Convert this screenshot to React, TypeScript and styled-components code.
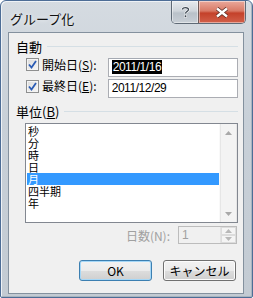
import * as React from "react";
import styled, { createGlobalStyle } from "styled-components";

const GlobalStyle = createGlobalStyle`
  html, body {
    margin: 0;
    padding: 0;
    background: #ffffff;
  }
  body {
    font-family: "Noto Sans CJK JP", "Noto Sans", sans-serif;
  }
`;

const UI_FONT = `"Noto Sans CJK JP", "Noto Sans", sans-serif`;

const Window = styled.div`
  box-sizing: border-box;
  width: 253px;
  height: 298px;
  border: 1px solid #4d6d96;
  border-radius: 6px 6px 2px 2px;
  padding: 0 8px 3px 7px;
  background: linear-gradient(180deg, #d5dbe1 0%, #c8d0d8 40%, #c3cbd3 100%);
  box-shadow: inset 1px 1px 0 #eef2f6, inset -1px -1px 0 #a9b4bf;
  display: flex;
  flex-direction: column;
  overflow: hidden;
`;

const TitleBar = styled.div`
  height: 31px;
  display: flex;
  align-items: flex-start;
  justify-content: space-between;
  flex-shrink: 0;
`;

const Title = styled.div`
  font-family: ${UI_FONT};
  font-size: 13px;
  line-height: 16px;
  margin: 10px 0 0 2px;
  color: #111;
  text-shadow: 0 0 4px rgba(255, 255, 255, 0.9);
`;

const CaptionButtons = styled.div`
  display: flex;
  margin-right: -2px;
  border: 1px solid #5f6a76;
  border-top: none;
  border-radius: 0 0 5px 5px;
  overflow: hidden;
  height: 22px;
`;

const CaptionButton = styled.div<{ $close?: boolean }>`
  width: ${p => (p.$close ? "46px" : "26px")};
  height: 22px;
  display: flex;
  align-items: center;
  justify-content: center;
  background: ${p =>
    p.$close
      ? "linear-gradient(180deg, #e9a99c 0%, #d97a66 45%, #c4412a 55%, #d2604a 100%)"
      : "linear-gradient(180deg, #e6eaee 0%, #cfd5db 45%, #b9c1c9 55%, #c8cfd6 100%)"};
  border-left: ${p => (p.$close ? "1px solid #6f5a58" : "none")};
  box-shadow: inset 0 0 0 1px rgba(255, 255, 255, 0.45);
`;

const Client = styled.div`
  box-sizing: border-box;
  height: 262px;
  border: 1px solid #84919e;
  background: #f0f0f0;
  padding: 6px 5px 0 7px;
  display: flex;
  flex-direction: column;
`;

const GroupHeader = styled.div<{ $top: number }>`
  display: flex;
  align-items: center;
  height: 14px;
  margin-top: ${p => p.$top}px;
  font-family: ${UI_FONT};
  font-size: 13px;
  color: #000;
`;

const HeaderLine = styled.div`
  flex: 1;
  height: 1px;
  background: #d5dfe5;
  margin-left: 5px;
`;

const FieldRow = styled.div<{ $top: number }>`
  display: flex;
  align-items: flex-start;
  margin-top: ${p => p.$top}px;
  padding-left: 10px;
  height: 19px;
`;

const CheckBox = styled.div<{ $offset?: number }>`
  box-sizing: border-box;
  width: 13px;
  height: 13px;
  margin-top: ${p => p.$offset ?? 0}px;
  border: 1px solid #8e8f8f;
  background: linear-gradient(135deg, #dcdcdc 0%, #f6f6f6 100%);
  box-shadow: inset 0 0 0 1px #f4f4f4;
  display: flex;
  align-items: center;
  justify-content: center;
  flex-shrink: 0;
`;

const FieldLabel = styled.div`
  font-family: ${UI_FONT};
  font-size: 12px;
  line-height: 13px;
  margin-left: 3px;
  width: 66px;
  color: #000;
  u {
    text-decoration: underline;
  }
`;

const TextBox = styled.div`
  box-sizing: border-box;
  width: 131px;
  height: 19px;
  border: 1px solid #abadb3;
  border-top-color: #a4a9b2;
  background: #fff;
  padding: 1px 0 0 3px;
  font-family: "Liberation Sans", sans-serif;
  font-size: 12px;
  letter-spacing: -0.45px;
  line-height: 14px;
  color: #000;
`;

const Selected = styled.span`
  background: #000;
  color: #fff;
  padding: 0 1px;
`;

const ListBox = styled.div`
  box-sizing: border-box;
  width: 213px;
  height: 100px;
  margin: 5px 0 0 9px;
  border: 1px solid #828790;
  background: #fff;
  display: flex;
  flex-shrink: 0;
`;

const ListItems = styled.div`
  width: 192px;
  padding: 1px 0 0 1px;
`;

const ListItem = styled.div<{ $selected?: boolean }>`
  height: 12px;
  line-height: 12px;
  font-family: ${UI_FONT};
  font-size: 11px;
  padding-left: 1px;
  background: ${p => (p.$selected ? "#3399ff" : "transparent")};
  color: ${p => (p.$selected ? "#fff" : "#000")};
`;

const ScrollBar = styled.div`
  margin-left: auto;
  width: 17px;
  display: flex;
  flex-direction: column;
  justify-content: space-between;
  background: #f3f3f3;
  border-left: 1px solid #f9f9f9;
  box-shadow: inset -1px 0 0 #e6e6e6, inset 1px 0 0 #e6e6e6;
`;

const ScrollArrow = styled.div`
  height: 17px;
  display: flex;
  align-items: center;
  justify-content: center;
`;

const DaysRow = styled.div`
  display: flex;
  align-items: center;
  justify-content: flex-end;
  margin: 3px 1px 0 0;
  height: 18px;
`;

const DaysLabel = styled.div`
  font-family: ${UI_FONT};
  font-size: 12px;
  color: #a0a0a0;
  margin-right: 8px;
`;

const SpinBox = styled.div`
  box-sizing: border-box;
  width: 59px;
  height: 18px;
  border: 1px solid #bcbcbc;
  background: #f0f0f0;
  display: flex;
`;

const SpinValue = styled.div`
  flex: 1;
  padding-left: 3px;
  font-family: "Liberation Sans", sans-serif;
  font-size: 12px;
  line-height: 16px;
  color: #a0a0a0;
`;

const SpinButtons = styled.div`
  width: 15px;
  display: flex;
  flex-direction: column;
  border-left: 1px solid #e2e2e2;
`;

const SpinHalf = styled.div`
  flex: 1;
  display: flex;
  align-items: center;
  justify-content: center;
  background: #f4f4f4;
  border: 1px solid #dcdcdc;
`;

const ButtonRow = styled.div`
  display: flex;
  justify-content: flex-end;
  gap: 11px;
  margin: 16px 2px 0 0;
`;

const PushButton = styled.div<{ $default?: boolean }>`
  box-sizing: border-box;
  width: 73px;
  height: 21px;
  border: 1px solid ${p => (p.$default ? "#3c7fb1" : "#707070")};
  border-radius: 3px;
  background: linear-gradient(180deg, #f2f2f2 0%, #ebebeb 50%, #dddddd 51%, #cfcfcf 100%);
  box-shadow: inset 0 0 0 1px ${p => (p.$default ? "#a5d7f7" : "#fcfcfc")};
  display: flex;
  align-items: center;
  justify-content: center;
  font-family: ${UI_FONT};
  font-size: 12px;
  color: #000;
`;

const Check = () => (
  <svg width="9" height="9" viewBox="0 0 9 9">
    <path d="M1 4.5 L3.5 7.5 L8 1" fill="none" stroke="#2a5bb4" strokeWidth="1.8" />
  </svg>
);

const Arrow = ({ down, color = "#a8a8a8" }: { down?: boolean; color?: string }) => (
  <svg width="7" height="4" viewBox="0 0 7 4">
    <path d={down ? "M0 0 L7 0 L3.5 4 Z" : "M0 4 L7 4 L3.5 0 Z"} fill={color} />
  </svg>
);

const units = ["秒", "分", "時", "日", "月", "四半期", "年"];

export default function App() {
  return (
    <>
      <GlobalStyle />
      <Window>
        <TitleBar>
          <Title>グループ化</Title>
          <CaptionButtons>
            <CaptionButton>
              <svg width="9" height="12" viewBox="0 0 9 12">
                <path
                  d="M1.5 3.5 C1.5 1 7.5 1 7.5 3.5 C7.5 5.5 4.5 5.5 4.5 7.5"
                  fill="none"
                  stroke="#fff"
                  strokeWidth="2.4"
                />
                <path
                  d="M1.5 3.5 C1.5 1 7.5 1 7.5 3.5 C7.5 5.5 4.5 5.5 4.5 7.5"
                  fill="none"
                  stroke="#3b4550"
                  strokeWidth="1.3"
                />
                <rect x="3.3" y="9" width="2.4" height="2.4" fill="#3b4550" stroke="#fff" strokeWidth="0.6" />
              </svg>
            </CaptionButton>
            <CaptionButton $close>
              <svg width="14" height="11" viewBox="0 0 14 11">
                <path d="M2 1.5 L12 9.5 M12 1.5 L2 9.5" stroke="#5a2a22" strokeWidth="4" />
                <path d="M2 1.5 L12 9.5 M12 1.5 L2 9.5" stroke="#ffffff" strokeWidth="2.4" />
              </svg>
            </CaptionButton>
          </CaptionButtons>
        </TitleBar>
        <Client>
          <GroupHeader $top={0}>
            自動
            <HeaderLine />
          </GroupHeader>
          <FieldRow $top={5}>
            <CheckBox>
              <Check />
            </CheckBox>
            <FieldLabel>
              開始日(<u>S</u>):
            </FieldLabel>
            <TextBox>
              <Selected>2011/1/16</Selected>
            </TextBox>
          </FieldRow>
          <FieldRow $top={2}>
            <CheckBox $offset={1}>
              <Check />
            </CheckBox>
            <FieldLabel>
              最終日(<u>E</u>):
            </FieldLabel>
            <TextBox>2011/12/29</TextBox>
          </FieldRow>
          <GroupHeader $top={6}>
            単位(<u>B</u>)
            <HeaderLine />
          </GroupHeader>
          <ListBox>
            <ListItems>
              {units.map(u => (
                <ListItem key={u} $selected={u === "月"}>
                  {u}
                </ListItem>
              ))}
            </ListItems>
            <ScrollBar>
              <ScrollArrow>
                <Arrow />
              </ScrollArrow>
              <ScrollArrow>
                <Arrow down />
              </ScrollArrow>
            </ScrollBar>
          </ListBox>
          <DaysRow>
            <DaysLabel>日数(N):</DaysLabel>
            <SpinBox>
              <SpinValue>1</SpinValue>
              <SpinButtons>
                <SpinHalf>
                  <Arrow color="#b8b8b8" />
                </SpinHalf>
                <SpinHalf>
                  <Arrow down color="#b8b8b8" />
                </SpinHalf>
              </SpinButtons>
            </SpinBox>
          </DaysRow>
          <ButtonRow>
            <PushButton $default>OK</PushButton>
            <PushButton>キャンセル</PushButton>
          </ButtonRow>
        </Client>
      </Window>
    </>
  );
}
